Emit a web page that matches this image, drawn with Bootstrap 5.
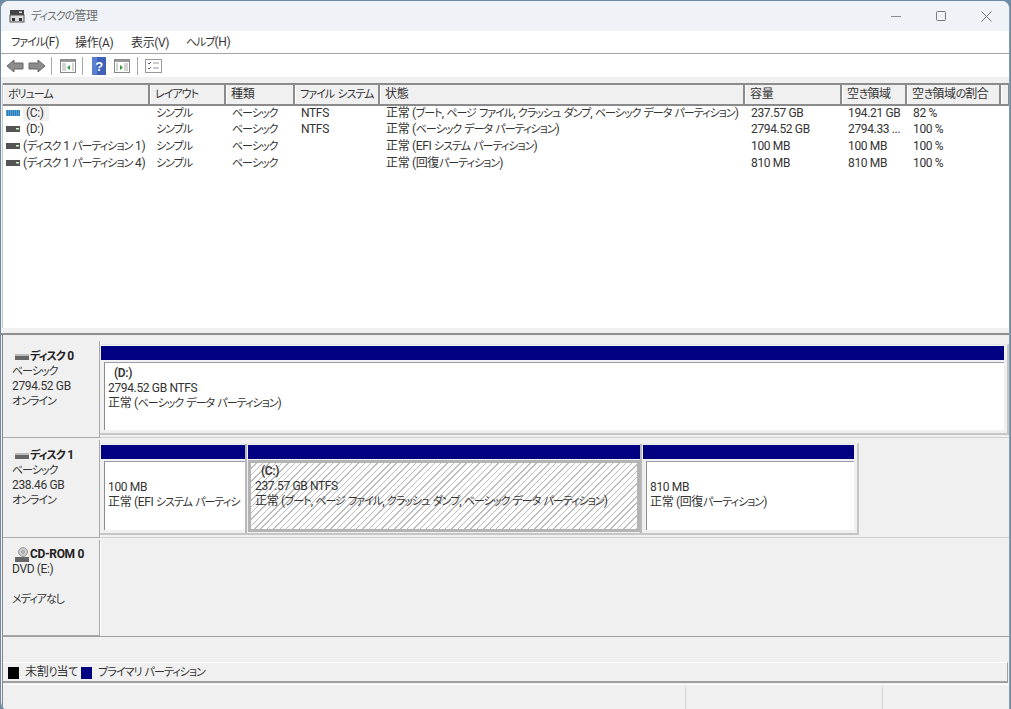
<!DOCTYPE html>
<html lang="ja">
<head>
<meta charset="utf-8">
<title>ディスクの管理</title>
<link rel="stylesheet" href="https://cdn.jsdelivr.net/npm/bootstrap@5.3.0/dist/css/bootstrap.min.css">
<style>
html,body{height:100%;margin:0;background:#6f8aa5;overflow:hidden}
body{font:12px/16px Roboto,"Noto Sans CJK JP",sans-serif;font-feature-settings:"palt";color:#333;letter-spacing:-.35px}
.kn{font-size:11px;letter-spacing:-1px;word-spacing:1.500px}
.win{width:1009px;height:709px;margin-left:1px;margin-top:1px;background:#f0f0f0;border-radius:8px 8px 0 8px;overflow:hidden;display:flex;flex-direction:column;border-right:1px solid #8a9cb0}
.titlebar{height:30px;background:#eff3f8;display:flex;align-items:center;padding-left:8px;flex:none}
.titlebar .ttl{margin-left:6px;color:#6d6d6d;font-size:12px;padding-top:1px}
.wbtn{width:45px;height:30px;display:flex;align-items:center;justify-content:center}
.menubar{height:23px;background:#fff;display:flex;align-items:center;padding:1px 0 0 10px;border-bottom:1px solid #a5a5a5;flex:none;color:#333}
.menubar span.mi:nth-child(1){width:64px}.menubar span.mi:nth-child(2){width:56px}.menubar span.mi:nth-child(3){width:55px}
.toolbar{height:23px;background:#fff;display:flex;align-items:center;padding-left:5px;flex:none}
.tsep{width:1px;height:18px;background:#a8a8a8;flex:none;margin-left:5px}
.tg4{margin-left:4px}.tg6{margin-left:6px}.tg7{margin-left:7px}.tg8{margin-left:8px}.tg9{margin-left:9px}
.spacer1{height:6px;background:#f0f0f0;flex:none}
.listwrap{height:245px;background:#fff;flex:none;margin-left:1px;border-left:1px solid #c8c8c8}
.vt{table-layout:fixed;width:1006px;border-collapse:collapse}
.vt th{font-weight:400;height:20.500px;padding:0 0 0 5px;background:#f0f0f0;border-top:2px solid #8b8b8b;border-bottom:2px solid #8b8b8b;border-right:2px solid #8b8b8b;box-shadow:inset 1px 0 0 #fff;white-space:nowrap;overflow:hidden}
.vt td{height:17px;padding:0 0 0 7px;white-space:nowrap;overflow:hidden;line-height:14px;border:0;vertical-align:middle}
.vt tbody tr:first-child td{height:16px}
.vt td:first-child{padding-left:3px}
.vico{display:inline-block;width:14px;height:6px;vertical-align:1px;margin-right:3px}
.sel{background:#f0f0f0;padding:1px 5px 1px 3px}
.split{height:7px;flex:none;background:#f0f0f0;border-bottom:2px solid #8f8f8f}
.diskpane{flex:1;display:flex;flex-direction:column;margin-left:1px;border-left:1px solid #8a8a8a;min-height:0}
.drow{display:flex;flex:none;margin-top:2px}
.drow-first{margin-top:6px}
.dlabel{width:97px;flex:none;padding:8px 0 0 9px;border-right:1px solid #a9a9a9;box-shadow:1px 0 0 #fff;border-bottom:1px solid #a9a9a9;line-height:15px;color:#333}
.dlabel-cd{padding-top:7px}
.dlabel b{font-weight:700;color:#222;display:flex;align-items:center;gap:1px;line-height:15px;height:15px;padding-left:3px}
.darea{flex:1;min-width:0;padding:3px 0 0 0;border-bottom:1px solid #d0d0d0}
.dbox{border:2px solid #c6c6c6;border-left:0;border-top:1px solid #e8e8e8;display:flex;background:#f0f0f0}
.part{display:flex;flex-direction:column;padding:1px 0 0 1px;border-right:2px solid #b8b8b8}
.part:last-child{border-right:0}
.part-end{padding-right:3px}
.pbar{height:14px;background:#000080;flex:none}
.pbody{flex:1;margin:2px 0 3px 3px;background:#fff;border-left:1px solid #8d8d8d;border-top:1px solid #9a9aa8;padding:3px 0 0 3px;overflow:hidden;white-space:nowrap;line-height:15px;color:#333}
.pname{padding-left:6px;font-weight:600;height:15px}
.hatch{background:#fff repeating-linear-gradient(135deg,#fff 0,#fff 3.500px,#bdbdbd 3.500px,#bdbdbd 4.500px);border:3px solid #b4b4b4;margin:1px 0 1px 0;padding:1px 0 0 4px}
.cdarea{flex:1;border-bottom:0}
.gapbottom{flex:1;border-top:1px solid #a0a0a0}
.legend{height:21px;flex:none;margin-right:1px;border-top:1px solid #fff;border-bottom:2px solid #a0a0a0;border-right:1px solid #a0a0a0;display:flex;align-items:center;padding:1px 0 0 5px;color:#333}
.sw{width:11px;height:12px;margin-right:6px;flex:none}
.statusbar{height:26px;flex:none;background:#f0f0f0;display:flex;justify-content:flex-end;border-top:1px solid #fff;margin-top:1px}
.sc{border-left:1px solid #d4d4d4;height:100%;margin-top:2px}
</style>
</head>
<body>
<div class="win">
  <div class="titlebar">
    <svg width="16" height="14" viewBox="0 0 16 14"><rect x="1" y="1" width="14" height="5" fill="#444"/><rect x="10" y="2.500" width="3" height="1.500" fill="#ddd"/><rect x="1" y="6" width="14" height="7" fill="#dcdcdc" stroke="#555"/><rect x="3" y="9" width="3" height="3" fill="#333"/><rect x="10" y="9" width="3" height="3" fill="#333"/></svg>
    <span class="ttl"><span class="kn">ディスクの</span>管理</span>
    <div class="ms-auto d-flex">
      <div class="wbtn"><svg width="11" height="11" viewBox="0 0 11 11"><path d="M0 5.500h10" stroke="#8a8a8a"/></svg></div>
      <div class="wbtn"><svg width="11" height="11" viewBox="0 0 11 11"><rect x=".5" y=".5" width="9" height="9" rx="1" fill="none" stroke="#777"/></svg></div>
      <div class="wbtn"><svg width="11" height="11" viewBox="0 0 11 11"><path d="M.5.500l10 10M10.500.500l-10 10" stroke="#777"/></svg></div>
    </div>
  </div>
  <div class="menubar"><span class="mi"><span class="kn">ファイル</span>(F)</span><span class="mi">操作(A)</span><span class="mi">表示(V)</span><span class="mi"><span class="kn">ヘルプ</span>(H)</span></div>
  <div class="toolbar">
    <svg width="18" height="14" viewBox="0 0 18 14"><path d="M1 7l7-6v3h9v6H8v3z" fill="#8c8c8c" stroke="#666"/></svg>
    <svg class="tg4" width="18" height="14" viewBox="0 0 18 14"><path d="M17 7l-7-6v3H1v6h9v3z" fill="#8c8c8c" stroke="#666"/></svg>
    <div class="tsep"></div>
    <svg class="tg8" width="17" height="16" viewBox="0 0 17 16"><rect x=".5" y="1.500" width="15" height="13" fill="#fff" stroke="#888"/><rect x="1" y="2" width="14" height="2" fill="#999"/><path d="M2 6h4M2 8h4M2 10h4M2 12h4M12 6h2M12 8h2M12 10h2M12 12h2" stroke="#aaa"/><path d="M10 7v5l-3-2.500z" fill="#3a9a3a"/></svg>
    <div class="tsep"></div>
    <svg class="tg9" width="14" height="18" viewBox="0 0 14 18"><rect width="14" height="18" fill="#3f62b8"/><rect width="5" height="18" fill="#5a7fd0"/><text x="7" y="14" text-anchor="middle" font-size="13" font-weight="700" fill="#fff" font-family="Liberation Sans">?</text></svg>
    <svg class="tg8" width="17" height="16" viewBox="0 0 17 16"><rect x=".5" y="1.500" width="15" height="13" fill="#fff" stroke="#888"/><rect x="1" y="2" width="14" height="2" fill="#999"/><path d="M2 6h2M2 8h2M2 10h2M2 12h2M10 6h4M10 8h4M10 10h4M10 12h4" stroke="#aaa"/><path d="M6 7v5l3-2.500z" fill="#3a9a3a"/></svg>
    <div class="tsep tg6"></div>
    <svg class="tg7" width="17" height="14" viewBox="0 0 17 14"><rect x=".5" y=".5" width="16" height="13" fill="#fff" stroke="#999"/><path d="M3 4l1 1 2-2M3 9l1 1 2-2" stroke="#558" fill="none"/><path d="M8 4h6M8 9h6" stroke="#999"/></svg>
  </div>
  <div class="spacer1"></div>
  <div class="listwrap">
    <table class="vt">
      <colgroup><col style="width:146px"><col style="width:76px"><col style="width:69px"><col style="width:85px"><col style="width:365px"><col style="width:97px"><col style="width:65px"><col style="width:94px"><col style="width:9px"></colgroup>
      <thead><tr><th><span class="kn">ボリューム</span></th><th><span class="kn">レイアウト</span></th><th>種類</th><th><span class="kn">ファイル システム</span></th><th>状態</th><th>容量</th><th>空<span class="kn">き</span>領域</th><th>空<span class="kn">き</span>領域<span class="kn">の</span>割合</th><th></th></tr></thead>
      <tbody>
        <tr><td><svg class="vico" viewBox="0 0 14 6"><rect width="14" height="6" fill="#2a7fc0"/><path d="M0 1h14M0 3h14M0 5h14" stroke="#bfe0f5" stroke-width=".6" stroke-dasharray="1 1"/></svg><span class="sel">(C:)</span></td><td><span class="kn">シンプル</span></td><td><span class="kn">ベーシック</span></td><td>NTFS</td><td>正常 (<span class="kn">ブート</span>, <span class="kn">ページ ファイル</span>, <span class="kn">クラッシュ ダンプ</span>, <span class="kn">ベーシック データ パーティション</span>)</td><td>237.57 GB</td><td>194.21 GB</td><td>82 %</td><td></td></tr>
        <tr><td><svg class="vico" viewBox="0 0 14 6"><rect width="14" height="6" fill="#555"/><rect x="10" y="2" width="3" height="1.500" fill="#cfc"/></svg><span class="sel bg-white">(D:)</span></td><td><span class="kn">シンプル</span></td><td><span class="kn">ベーシック</span></td><td>NTFS</td><td>正常 (<span class="kn">ベーシック データ パーティション</span>)</td><td>2794.52 GB</td><td>2794.33 ...</td><td>100 %</td><td></td></tr>
        <tr><td><svg class="vico" viewBox="0 0 14 6"><rect width="14" height="6" fill="#555"/><rect x="10" y="2" width="3" height="1.500" fill="#cfc"/></svg>(<span class="kn">ディスク</span> 1 <span class="kn">パーティション</span> 1)</td><td><span class="kn">シンプル</span></td><td><span class="kn">ベーシック</span></td><td></td><td>正常 (EFI <span class="kn">システム パーティション</span>)</td><td>100 MB</td><td>100 MB</td><td>100 %</td><td></td></tr>
        <tr><td><svg class="vico" viewBox="0 0 14 6"><rect width="14" height="6" fill="#555"/><rect x="10" y="2" width="3" height="1.500" fill="#cfc"/></svg>(<span class="kn">ディスク</span> 1 <span class="kn">パーティション</span> 4)</td><td><span class="kn">シンプル</span></td><td><span class="kn">ベーシック</span></td><td></td><td>正常 (回復<span class="kn">パーティション</span>)</td><td>810 MB</td><td>810 MB</td><td>100 %</td><td></td></tr>
      </tbody>
    </table>
  </div>
  <div class="split"></div>
  <div class="diskpane">
    <div class="drow drow-first">
      <div class="dlabel" style="height:97px"><b><svg width="14" height="6" viewBox="0 0 14 6"><rect width="14" height="6" fill="#666"/><rect width="14" height="2" fill="#bbb"/></svg><span><span class="kn">ディスク</span> 0</span></b><span class="kn">ベーシック</span><br>2794.52 GB<br><span class="kn">オンライン</span></div>
      <div class="darea">
        <div class="dbox" style="height:91px">
          <div class="part" style="width:904px">
            <div class="pbar"></div>
            <div class="pbody"><div class="pname">(D:)</div>2794.52 GB NTFS<br>正常 (<span class="kn">ベーシック データ パーティション</span>)</div>
          </div>
        </div>
      </div>
    </div>
    <div class="drow">
      <div class="dlabel" style="height:98px"><b><svg width="14" height="6" viewBox="0 0 14 6"><rect width="14" height="6" fill="#666"/><rect width="14" height="2" fill="#bbb"/></svg><span><span class="kn">ディスク</span> 1</span></b><span class="kn">ベーシック</span><br>238.46 GB<br><span class="kn">オンライン</span></div>
      <div class="darea">
        <div class="dbox" style="height:92px;width:759px">
          <div class="part" style="width:147px">
            <div class="pbar"></div>
            <div class="pbody"><div class="pname"></div>100 MB<br>正常 (EFI <span class="kn">システム パーティシ</span></div>
          </div>
          <div class="part" style="width:395px">
            <div class="pbar"></div>
            <div class="pbody hatch"><div class="pname">(C:)</div>237.57 GB NTFS<br>正常 (<span class="kn">ブート</span>, <span class="kn">ページ ファイル</span>, <span class="kn">クラッシュ ダンプ</span>, <span class="kn">ベーシック データ パーティション</span>)</div>
          </div>
          <div class="part part-end" style="width:215px">
            <div class="pbar"></div>
            <div class="pbody"><div class="pname"></div>810 MB<br>正常 (回復<span class="kn">パーティション</span>)</div>
          </div>
        </div>
      </div>
    </div>
    <div class="drow">
      <div class="dlabel dlabel-cd" style="height:96px"><b><svg width="14" height="16" viewBox="0 0 14 16"><circle cx="8" cy="5" r="4.500" fill="#ccc" stroke="#999"/><circle cx="8" cy="5" r="1.300" fill="#fff" stroke="#888"/><rect y="10" width="14" height="5" fill="#666"/></svg>CD-ROM 0</b>DVD (E:)<br><br><span class="kn">メディアなし</span></div>
      <div class="cdarea"></div>
    </div>
    <div class="gapbottom"></div>
    <div class="legend"><span class="sw bg-black"></span><span class="me-1">未割<span class="kn">り</span>当<span class="kn">て</span></span><span class="sw" style="background:#000080"></span><span class="kn">プライマリ パーティション</span></div>
    <div class="statusbar"><div class="sc" style="width:197px"></div><div class="sc" style="width:127px"></div></div>
  </div>
</div>
</body>
</html>
